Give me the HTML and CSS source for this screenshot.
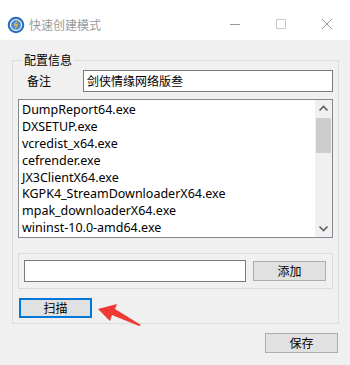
FILE: index.html
```html
<!DOCTYPE html>
<html>
<head>
<meta charset="utf-8">
<link rel="stylesheet" href="styles.css">
</head>
<body>
<div class="window">
  <div class="titlebar">
    <svg class="app-icon" width="18" height="18" viewBox="0 0 18 18">
      <circle cx="9" cy="9" r="7.2" fill="#ffffff" stroke="#2f6fb8" stroke-width="2.2"/>
      <circle cx="9" cy="9" r="5" fill="#4a8fd6"/>
      <path d="M10.2 3.8 L6.6 9.6 L8.8 9.6 L7.6 14.2 L11.4 8.2 L9.2 8.2 Z" fill="#f5b921"/>
    </svg>
    <span class="title">快速创建模式</span>
    <div class="controls">
      <svg class="ctl" width="46" height="30" viewBox="0 0 46 30"><line x1="18" y1="15.5" x2="28" y2="15.5" stroke="#999" stroke-width="1"/></svg>
      <svg class="ctl" width="46" height="30" viewBox="0 0 46 30"><rect x="18.5" y="10.5" width="9" height="9" fill="none" stroke="#ccc" stroke-width="1"/></svg>
      <svg class="ctl" width="46" height="30" viewBox="0 0 46 30"><path d="M18 10 L28 20 M28 10 L18 20" stroke="#999" stroke-width="1"/></svg>
    </div>
  </div>
  <div class="client">
    <fieldset class="group">
      <legend>配置信息</legend>
      <div class="note-row">
        <span class="note-label">备注</span>
        <div class="textbox note-box">剑侠情缘网络版叁</div>
      </div>
      <div class="listbox">
        <ul class="items">
          <li>DumpReport64.exe</li>
          <li>DXSETUP.exe</li>
          <li>vcredist_x64.exe</li>
          <li>cefrender.exe</li>
          <li>JX3ClientX64.exe</li>
          <li>KGPK4_StreamDownloaderX64.exe</li>
          <li>mpak_downloaderX64.exe</li>
          <li>wininst-10.0-amd64.exe</li>
        </ul>
        <div class="vscroll">
          <div class="sb-btn">
            <svg width="17" height="17" viewBox="0 0 17 17"><path d="M4.5 10.5 L8.5 6.5 L12.5 10.5" fill="none" stroke="#606060" stroke-width="1.6"/></svg>
          </div>
          <div class="sb-thumb"></div>
          <div class="sb-track"></div>
          <div class="sb-btn">
            <svg width="17" height="17" viewBox="0 0 17 17"><path d="M4.5 6.5 L8.5 10.5 L12.5 6.5" fill="none" stroke="#606060" stroke-width="1.6"/></svg>
          </div>
        </div>
      </div>
      <div class="addbox">
        <div class="textbox add-input"></div>
        <div class="btn">添加</div>
      </div>
      <div class="btn scan">扫描</div>
    </fieldset>
    <div class="footer">
      <div class="btn">保存</div>
    </div>
  </div>
  <svg class="arrow" width="50" height="30" viewBox="0 0 50 30">
    <polygon points="0,10 19,5 17,10 43,26 41,27 14,16 12,22" fill="#ee3a35"/>
  </svg>
</div>
</body>
</html>
```

FILE: styles.css
```css
* { box-sizing: border-box; }
html, body { margin: 0; padding: 0; }
body {
  background: #f0f0f0;
  font-family: "Noto Sans", "Noto Sans CJK SC", sans-serif;
  font-size: 12px;
  color: #000;
}
.window {
  position: relative;
  width: 350px;
  height: 365px;
  background: #f0f0f0;
}
.titlebar {
  height: 40px;
  background: #ffffff;
  display: flex;
  align-items: center;
  padding-left: 7px;
  padding-top: 9px;
}
.app-icon { flex: none; margin-top: 1px; }
.title {
  margin-left: 4px;
  color: #9a9a9a;
  font-family: "Noto Sans CJK SC", sans-serif;
  font-size: 12px;
  line-height: 16px;
}
.controls {
  margin-left: auto;
  display: flex;
  align-self: flex-start;
}
.ctl { display: block; }
.client {
  padding: 0 0 0 12px;
}
.group {
  margin: 12px 0 0 0;
  width: 327px;
  border: 1px solid #dcdcdc;
  padding: 2px 5px 5px 5px;
  min-width: 0;
}
.group legend {
  padding: 0 2px;
  margin-left: 4px;
  font-family: "Noto Sans CJK SC", sans-serif;
  font-size: 12px;
  line-height: 16px;
}
.note-row {
  display: flex;
  align-items: center;
  height: 22px;
}
.note-label {
  width: 65px;
  padding-left: 9px;
  font-family: "Noto Sans CJK SC", sans-serif;
  font-size: 12px;
  line-height: 16px;
}
.textbox {
  background: #fff;
  border: 1px solid #7a7a7a;
  height: 22px;
}
.note-box {
  flex: 1;
  padding-left: 3px;
  font-family: "Noto Sans CJK SC", sans-serif;
  line-height: 20px;
}
.listbox {
  margin-top: 7px;
  height: 139px;
  background: #fff;
  border: 1px solid #828790;
  display: flex;
}
.items {
  flex: 1;
  list-style: none;
  margin: 0;
  padding: 2px 0 0 3px;
  overflow: hidden;
  font-size: 12.5px;
}
.items li {
  line-height: 16.9px;
  height: 16.9px;
  white-space: nowrap;
}
.vscroll {
  width: 17px;
  background: #f0f0f0;
  display: flex;
  flex-direction: column;
}
.sb-btn { height: 17px; }
.sb-btn svg { display: block; }
.sb-thumb {
  height: 35px;
  margin: 1px 1px 0 1px;
  background: #cdcdcd;
}
.sb-track { flex: 1; }
.addbox {
  margin-top: 15px;
  height: 36px;
  border: 1px solid #dcdcdc;
  display: flex;
  align-items: center;
  gap: 7px;
  padding: 0 6px 0 5px;
}
.add-input { flex: 1; }
.btn {
  width: 73px;
  height: 20px;
  background: #e1e1e1;
  border: 1px solid #adadad;
  display: flex;
  align-items: center;
  justify-content: center;
  font-family: "Noto Sans CJK SC", sans-serif;
  font-size: 12px;
  line-height: 16px;
}
.scan {
  margin: 9px 0 0 1px;
  border: 2px solid #0078d7;
}
.footer {
  display: flex;
  justify-content: flex-end;
  padding-right: 12px;
  margin-top: 9px;
}
.arrow {
  position: absolute;
  left: 98px;
  top: 299px;
}
```
